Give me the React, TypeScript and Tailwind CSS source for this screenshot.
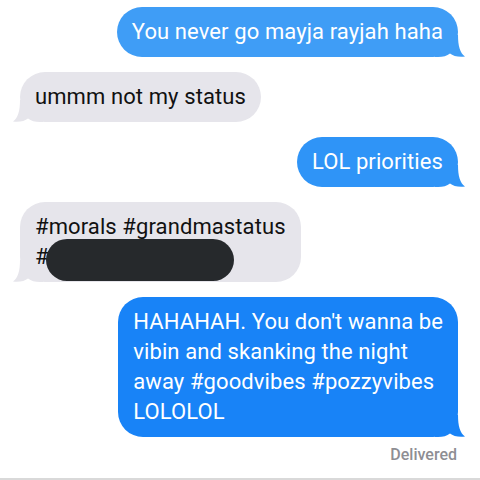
import React from 'react';

type Msg = { from: 'me' | 'them'; lines: string[]; color?: string; redact?: boolean };

const messages: Msg[] = [
  { from: 'me', lines: ['You never go mayja rayjah haha'], color: '#3f9df6' },
  { from: 'them', lines: ['ummm not my status'] },
  { from: 'me', lines: ['LOL priorities'], color: '#2f94f7' },
  { from: 'them', lines: ['#morals #grandmastatus', '#'], redact: true },
  {
    from: 'me',
    lines: ['HAHAHAH. You don\'t wanna be', 'vibin and skanking the night', 'away #goodvibes #pozzyvibes', 'LOLOLOL'],
    color: '#1883f7',
  },
];

function Tail({ side, color }: { side: 'left' | 'right'; color: string }) {
  // iMessage style tail, drawn over the bottom corner of the bubble
  if (side === 'right') {
    return (
      <svg className="absolute bottom-0 right-[-7px]" width="30" height="22" viewBox="0 0 30 22">
        <path d="M0 0 H23 C23 11 25 18 30 21.5 C24 22.5 18 21 15 18.5 C12 21 8 22 3 22 H0 Z" fill={color} />
      </svg>
    );
  }
  return (
    <svg className="absolute bottom-0 left-[-7px]" width="30" height="22" viewBox="0 0 30 22">
      <path d="M30 0 H7 C7 11 5 18 0 21.5 C6 22.5 12 21 15 18.5 C18 21 22 22 27 22 H30 Z" fill={color} />
    </svg>
  );
}

export default function App() {
  return (
    <div className="w-[480px] h-[480px] bg-white flex flex-col overflow-hidden font-['Roboto','Liberation_Sans',sans-serif]">
      <div className="flex-1 flex flex-col gap-[15px] pt-[7px] pl-[20px] pr-[22px]">
        {messages.map((m, idx) => {
          const bg = m.from === 'me' ? m.color! : '#e6e5eb';
          return (
            <div key={idx} className={m.from === 'me' ? 'flex justify-end' : 'flex justify-start'}>
              <div
                className={
                  'relative rounded-[25px] px-[15px] py-[10px] text-[22px] leading-[30px] tracking-[0.1px] ' +
                  (m.from === 'me' ? 'text-white' : 'text-[#111]')
                }
                style={{ backgroundColor: bg }}
              >
                <Tail side={m.from === 'me' ? 'right' : 'left'} color={bg} />
                <div className="relative">
                  {m.lines.map((l, i) => (
                    <div key={i} className="whitespace-nowrap">{l}</div>
                  ))}
                </div>
                {m.redact && (
                  <span className="absolute left-[26px] top-[37px] w-[188px] h-[42px] rounded-full bg-[#26292c]" />
                )}
              </div>
            </div>
          );
        })}
        <div className="flex justify-end -mt-[7px] pr-[1px]">
          <span className="text-[16px] leading-[20px] font-medium text-[#8e8e93]">Delivered</span>
        </div>
      </div>
      <div className="h-[2px] bg-[#d9d9d9]" />
    </div>
  );
}
